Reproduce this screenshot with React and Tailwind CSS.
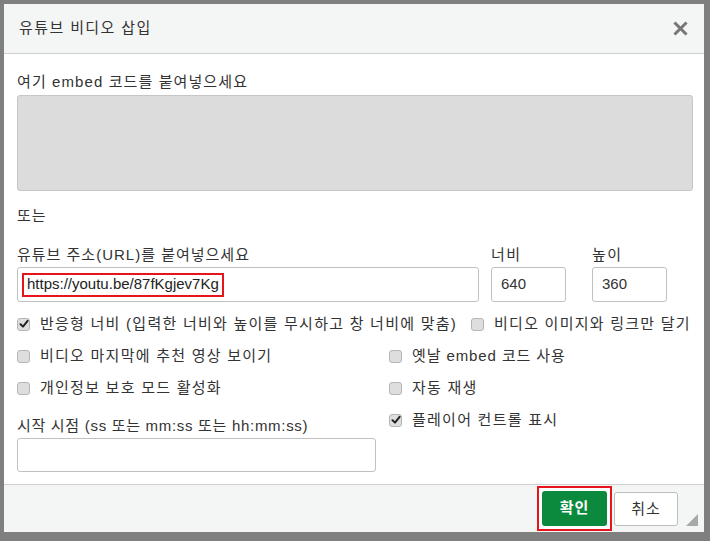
import React from 'react';

const font = { fontFamily: '"Liberation Sans", Arial, "Noto Sans CJK KR", sans-serif' };

function Check({ checked, label, wide = true }) {
    return (
        <label className="flex items-center h-[18px] text-[15px] text-[#333]">
            <span className="w-[13px] h-[13px] rounded-[3px] border border-[#b5b5b5] bg-[#dedede] flex items-center justify-center mr-[10px] shrink-0">
                {checked && (
                    <svg width="10" height="10" viewBox="0 0 10 10">
                        <path d="M1.5 5.2 L4 7.6 L8.6 1.8" fill="none" stroke="#222" strokeWidth="2" strokeLinecap="round" strokeLinejoin="round" />
                    </svg>
                )}
            </span>
            <span className={wide ? 'tracking-[1.25px] whitespace-nowrap' : 'tracking-[0.9px] whitespace-nowrap'}>{label}</span>
        </label>
    );
}

export default function App() {
    return (
        <div className="w-[710px] h-[541px] bg-[#7f7f7f] pt-[4px] pl-[4px] overflow-hidden" style={font}>
            <div className="w-[700px] h-[528px] bg-white flex flex-col">
                {/* header */}
                <div className="h-[50px] bg-[#f4f5f5] border-b border-[#cfcfcf] flex items-center justify-between pl-[15px] pr-[16px]">
                    <h2 className="text-[15px] text-[#333] tracking-[1.4px]">유튜브 비디오 삽입</h2>
                    <svg width="15" height="15" viewBox="0 0 15 15">
                        <path d="M2.5 2.5 L12.5 12.5 M12.5 2.5 L2.5 12.5" stroke="#777" strokeWidth="3" strokeLinecap="square" />
                    </svg>
                </div>

                {/* body */}
                <div className="flex-1 pl-[13px] pr-[11px] pt-[19px] text-[15px] text-[#333]">
                    <p className="h-[18px] leading-[18px] tracking-[1.1px]">여기 embed 코드를 붙여넣으세요</p>
                    <div className="mt-[4px] h-[96px] rounded-[3px] border border-[#c6c6c6] bg-[#dcdcdc]" />

                    <p className="mt-[16px] h-[18px] leading-[18px] tracking-[1px]">또는</p>

                    <div className="mt-[21px] flex items-start">
                        <div className="w-[462px]">
                            <p className="h-[18px] leading-[18px] tracking-[1px]">유튜브 주소(URL)를 붙여넣으세요</p>
                            <div className="mt-[3px] h-[35px] rounded-[3px] border border-[#c0c0c0] flex items-center pl-[4px]">
                                <span className="border-2 border-[#e8141b] h-[24px] px-[3px] flex items-center text-[15px] text-[#222]">
                                    https://youtu.be/87fKgjev7Kg
                                </span>
                            </div>
                        </div>
                        <div className="w-[75px] ml-[12px]">
                            <p className="h-[18px] leading-[18px] tracking-[1.4px]">너비</p>
                            <div className="mt-[3px] h-[35px] rounded-[3px] border border-[#c0c0c0] flex items-center pl-[9px]">640</div>
                        </div>
                        <div className="w-[75px] ml-[26px]">
                            <p className="h-[18px] leading-[18px] tracking-[1.4px]">높이</p>
                            <div className="mt-[3px] h-[35px] rounded-[3px] border border-[#c0c0c0] flex items-center pl-[9px]">360</div>
                        </div>
                    </div>

                    <div className="mt-[13px] flex items-center gap-[14px]">
                        <Check checked label="반응형 너비 (입력한 너비와 높이를 무시하고 창 너비에 맞춤)" />
                        <Check label="비디오 이미지와 링크만 달기" />
                    </div>

                    <div className="mt-[14px] grid grid-cols-[372px_1fr]">
                        <div className="flex flex-col">
                            <Check label="비디오 마지막에 추천 영상 보이기" />
                            <div className="mt-[14px]"><Check label="개인정보 보호 모드 활성화" /></div>
                            <p className="mt-[20px] h-[18px] leading-[18px] tracking-[0.7px]">시작 시점 (ss 또는 mm:ss 또는 hh:mm:ss)</p>
                            <div className="mt-[3px] w-[359px] h-[34px] rounded-[3px] border border-[#c0c0c0]" />
                        </div>
                        <div className="flex flex-col gap-[14px]">
                            <Check wide={false} label="옛날 embed 코드 사용" />
                            <Check label="자동 재생" />
                            <Check checked label="플레이어 컨트롤 표시" />
                        </div>
                    </div>
                </div>

                {/* footer */}
                <div className="h-[48px] bg-[#f4f5f5] border-t border-[#cfcfcf] flex items-start justify-end pt-[1px] pr-[6px]">
                    <span className="border-2 border-[#e8141b] p-[3px] bg-white flex">
                        <button className="w-[65px] h-[35px] rounded-[3px] bg-[#0b8a3e] text-white text-[15px] font-bold tracking-[1px]">
                            확인
                        </button>
                    </span>
                    <button className="mt-[6px] ml-[2px] w-[64px] h-[34px] rounded-[3px] border border-[#bdbdbd] bg-white text-[15px] tracking-[1px] text-[#333]">
                        취소
                    </button>
                    <svg className="ml-[8px] mt-[28px]" width="12" height="12" viewBox="0 0 12 12">
                        <path d="M12 0 L12 12 L0 12 Z" fill="#a8a8a8" />
                    </svg>
                </div>
            </div>
        </div>
    );
}
